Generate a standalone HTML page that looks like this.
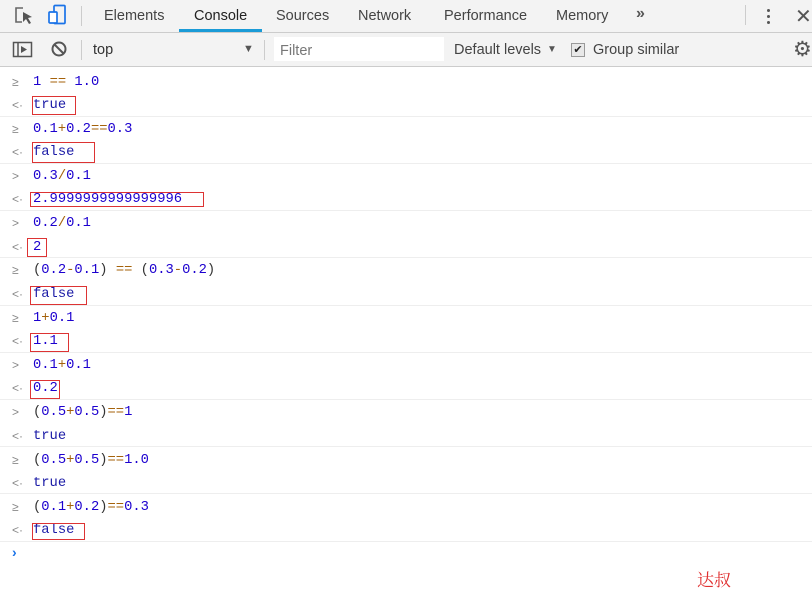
<!DOCTYPE html>
<html><head><meta charset="utf-8"><style>
body{margin:0;width:812px;height:600px;overflow:hidden;background:#fff;font-family:"Liberation Sans",sans-serif;position:relative}
.a{position:absolute}
.tb1{left:0;top:0;width:812px;height:32px;background:#f3f3f3;border-bottom:1px solid #ccc}
.tb2{left:0;top:33px;width:812px;height:33px;background:#f3f3f3;border-bottom:1px solid #ccc}
.tab{top:8px;font-size:14.5px;color:#444}
.c{font-family:"Liberation Mono",monospace;font-size:13.8px;left:33px;color:#1c00cf;white-space:pre;line-height:16px}
.o{color:#a5620a}.p{color:#333}
.g{left:12px;font-size:12px;color:#888;font-family:"Liberation Sans",sans-serif}
.ln{left:0;width:812px;height:1px;background:#eee}
.bx{border:1px solid #d33}
</style></head><body>
<div class="a tb1"></div>
<div class="a tb2"></div>
<svg class="a" style="left:14px;top:6px" width="22" height="20"><path d="M9 2H2v14h6" fill="none" stroke="#666" stroke-width="1.6"/><path d="M9 6l9 5-4 1 3 5-2 1-3-5-3 3z" fill="#555"/></svg>
<svg class="a" style="left:47px;top:4px" width="22" height="22"><rect x="7" y="1.5" width="11" height="18" rx="1" fill="none" stroke="#1a73e8" stroke-width="1.7"/><rect x="2" y="8" width="8" height="11" rx="1" fill="#fff" stroke="#1a73e8" stroke-width="1.7"/></svg>
<div class="a" style="left:81px;top:6px;width:1px;height:20px;background:#ccc"></div>
<div class="a tab" style="left:104px">Elements</div>
<div class="a tab" style="left:194px;color:#222">Console</div>
<div class="a" style="left:179px;top:29px;width:83px;height:3px;background:#1a9bd7"></div>
<div class="a tab" style="left:276px">Sources</div>
<div class="a tab" style="left:358px">Network</div>
<div class="a tab" style="left:444px">Performance</div>
<div class="a tab" style="left:556px">Memory</div>
<div class="a tab" style="left:636px;top:5px;font-size:16px;font-weight:bold;color:#555">»</div>
<div class="a" style="left:745px;top:5px;width:1px;height:20px;background:#ccc"></div>
<div class="a" style="left:767px;top:9px;width:3px;height:3px;border-radius:2px;background:#555;box-shadow:0 6px #555,0 12px #555"></div>
<div class="a" style="left:795px;top:4px;font-size:20px;color:#555">✕</div>
<svg class="a" style="left:12px;top:40px" width="22" height="20"><rect x="1.5" y="2.5" width="18" height="14" fill="none" stroke="#555" stroke-width="1.5"/><line x1="6" y1="3" x2="6" y2="16" stroke="#555" stroke-width="1.5"/><path d="M9 6l6 3.5-6 3.5z" fill="#555"/></svg>
<svg class="a" style="left:50px;top:40px" width="20" height="20"><circle cx="9" cy="9" r="6.5" fill="none" stroke="#555" stroke-width="2"/><line x1="4.5" y1="4.5" x2="13.5" y2="13.5" stroke="#555" stroke-width="2"/></svg>
<div class="a" style="left:81px;top:40px;width:1px;height:20px;background:#ccc"></div>
<div class="a" style="left:93px;top:42px;font-size:14.5px;color:#333">top</div>
<div class="a" style="left:243px;top:43px;font-size:11px;color:#555">▼</div>
<div class="a" style="left:264px;top:40px;width:1px;height:20px;background:#ccc"></div>
<div class="a" style="left:274px;top:37px;width:170px;height:24px;background:#fff"></div>
<div class="a" style="left:280px;top:43px;font-size:14.5px;color:#777">Filter</div>
<div class="a" style="left:454px;top:42px;font-size:14.5px;color:#444">Default levels</div>
<div class="a" style="left:547px;top:44px;font-size:10px;color:#555">▼</div>
<div class="a" style="left:571px;top:43px;width:12px;height:12px;border:1px solid #999;background:#e8e8e8;font-size:11px;line-height:12px;text-align:center;color:#222">✔</div>
<div class="a" style="left:593px;top:42px;font-size:14.5px;color:#444">Group similar</div>
<div class="a" style="left:793px;top:37px;font-size:21px;color:#555">⚙</div>
<div class="a ln" style="top:116px"></div><div class="a ln" style="top:163px"></div><div class="a ln" style="top:210px"></div><div class="a ln" style="top:257px"></div><div class="a ln" style="top:305px"></div><div class="a ln" style="top:352px"></div><div class="a ln" style="top:399px"></div><div class="a ln" style="top:446px"></div><div class="a ln" style="top:493px"></div><div class="a ln" style="top:541px"></div>
<div class="a g" style="top:75px">≥</div><div class="a g" style="top:98px">&lt;·</div>
<div class="a g" style="top:122px">≥</div><div class="a g" style="top:145px">&lt;·</div>
<div class="a g" style="top:169px">&gt;</div><div class="a g" style="top:192px">&lt;·</div>
<div class="a g" style="top:216px">&gt;</div><div class="a g" style="top:240px">&lt;·</div>
<div class="a g" style="top:263px">≥</div><div class="a g" style="top:287px">&lt;·</div>
<div class="a g" style="top:311px">≥</div><div class="a g" style="top:334px">&lt;·</div>
<div class="a g" style="top:358px">&gt;</div><div class="a g" style="top:381px">&lt;·</div>
<div class="a g" style="top:405px">&gt;</div><div class="a g" style="top:429px">&lt;·</div>
<div class="a g" style="top:453px">≥</div><div class="a g" style="top:476px">&lt;·</div>
<div class="a g" style="top:500px">≥</div><div class="a g" style="top:523px">&lt;·</div>
<div class="a" style="left:12px;top:544px;font-size:14px;color:#1a73e8;font-weight:bold">›</div>
<div class="a c" style="top:75px">1 <span class="o">==</span> 1.0</div>
<div class="a c" style="top:98px;color:#1a1aa6">true</div>
<div class="a c" style="top:122px">0.1<span class="o">+</span>0.2<span class="o">==</span>0.3</div>
<div class="a c" style="top:145px;color:#1a1aa6">false</div>
<div class="a c" style="top:169px">0.3<span class="o">/</span>0.1</div>
<div class="a c" style="top:192px">2.9999999999999996</div>
<div class="a c" style="top:216px">0.2<span class="o">/</span>0.1</div>
<div class="a c" style="top:240px">2</div>
<div class="a c" style="top:263px"><span class="p">(</span>0.2<span class="o">-</span>0.1<span class="p">)</span> <span class="o">==</span> <span class="p">(</span>0.3<span class="o">-</span>0.2<span class="p">)</span></div>
<div class="a c" style="top:287px;color:#1a1aa6">false</div>
<div class="a c" style="top:311px">1<span class="o">+</span>0.1</div>
<div class="a c" style="top:334px">1.1</div>
<div class="a c" style="top:358px">0.1<span class="o">+</span>0.1</div>
<div class="a c" style="top:381px">0.2</div>
<div class="a c" style="top:405px"><span class="p">(</span>0.5<span class="o">+</span>0.5<span class="p">)</span><span class="o">==</span>1</div>
<div class="a c" style="top:429px;color:#1a1aa6">true</div>
<div class="a c" style="top:453px"><span class="p">(</span>0.5<span class="o">+</span>0.5<span class="p">)</span><span class="o">==</span>1.0</div>
<div class="a c" style="top:476px;color:#1a1aa6">true</div>
<div class="a c" style="top:500px"><span class="p">(</span>0.1<span class="o">+</span>0.2<span class="p">)</span><span class="o">==</span>0.3</div>
<div class="a c" style="top:523px;color:#1a1aa6">false</div>
<div class="a bx" style="left:32px;top:96px;width:42px;height:17px"></div>
<div class="a bx" style="left:32px;top:142px;width:61px;height:19px"></div>
<div class="a bx" style="left:30px;top:192px;width:172px;height:13px"></div>
<div class="a bx" style="left:27px;top:238px;width:18px;height:17px"></div>
<div class="a bx" style="left:30px;top:286px;width:55px;height:17px"></div>
<div class="a bx" style="left:30px;top:333px;width:37px;height:17px"></div>
<div class="a bx" style="left:30px;top:380px;width:28px;height:17px"></div>
<div class="a bx" style="left:32px;top:523px;width:51px;height:15px"></div>
<div class="a" style="left:697px;top:566px;font-size:17px;color:#e03030;font-family:'Noto Serif CJK SC','Noto Sans CJK SC',serif">达叔</div>
</body></html>
